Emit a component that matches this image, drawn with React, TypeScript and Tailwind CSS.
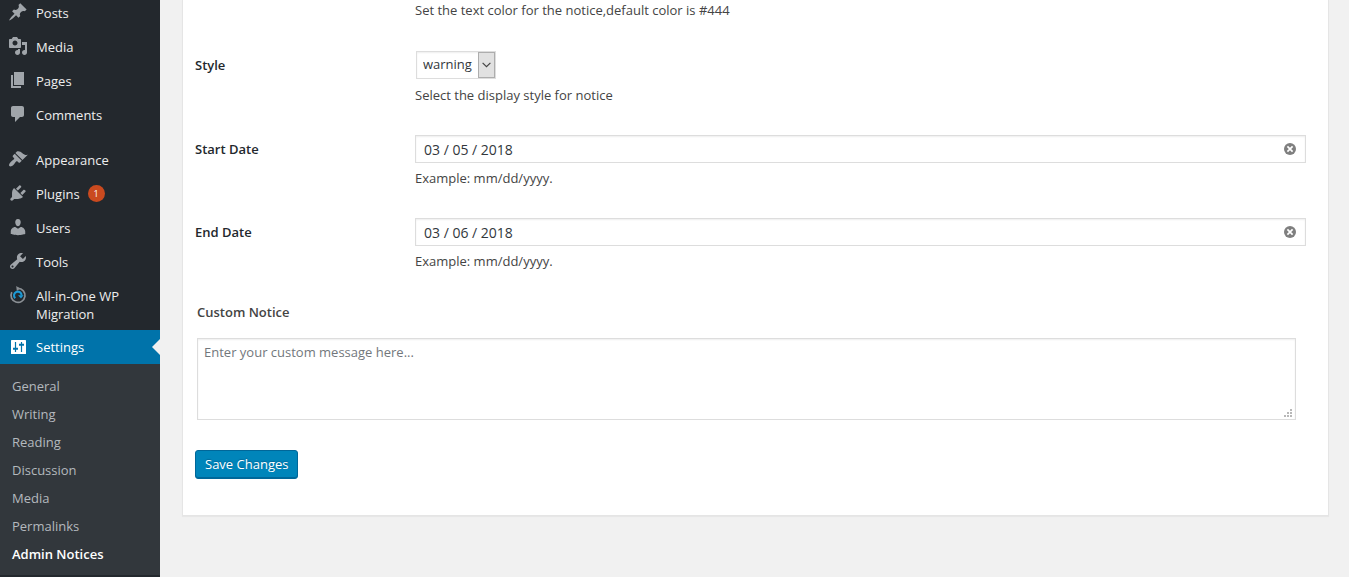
import type { ReactNode } from "react";
import { useState } from "react";

type MenuItem = { label: string; path?: string; badge?: number };

const primaryItems: MenuItem[] = [
  {
    label: "Posts",
    path: "M10.44 3.02l1.82-1.82 6.36 6.35-1.83 1.82c-1.05-.68-2.48-.57-3.41.36l-.75.75c-.92.93-1.04 2.35-.35 3.41l-1.83 1.82-2.41-2.41-2.8 2.79c-.42.42-3.38 2.71-3.8 2.29s1.86-3.39 2.28-3.81l2.79-2.79L4.1 9.36l1.83-1.82c1.05.69 2.48.57 3.4-.36l.75-.75c.93-.92 1.05-2.35.36-3.41z",
  },
  {
    label: "Media",
    path: "M13 11V4c0-.55-.45-1-1-1h-1.67L9 1H5L3.67 3H2c-.55 0-1 .45-1 1v7c0 .55.45 1 1 1h10c.55 0 1-.45 1-1zM7 4.5c1.38 0 2.5 1.12 2.5 2.5S8.38 9.5 7 9.5 4.5 8.38 4.5 7 5.62 4.5 7 4.5zM14 6h5v10.5c0 1.38-1.12 2.5-2.5 2.5S14 17.88 14 16.5s1.12-2.5 2.5-2.5c.17 0 .34.02.5.05V9h-3V6zm-4 8.05V13h2v3.5c0 1.38-1.12 2.5-2.5 2.5S7 17.88 7 16.5 8.12 14 9.5 14c.17 0 .34.02.5.05z",
  },
  { label: "Pages", path: "M6 15V2h10v13H6zm-1 1h8v2H3V5h2v11z" },
  {
    label: "Comments",
    path: "M5 2h9c1.1 0 2 .9 2 2v7c0 1.1-.9 2-2 2h-2l-5 5v-5H5c-1.1 0-2-.9-2-2V4c0-1.1.9-2 2-2z",
  },
];

const secondaryItems: MenuItem[] = [
  {
    label: "Appearance",
    path: "M14.48 11.06L7.41 3.99l1.5-1.5c.5-.56 2.3-.47 3.51.32 1.21.8 1.43 1.28 2.91 2.1 1.18.64 2.45 1.26 4.45.85zm-.71.71L6.7 4.7 4.93 6.47c-.39.39-.39 1.02 0 1.41l1.06 1.06c.39.39.39 1.03 0 1.42-.6.6-1.43 1.11-2.21 1.69-.35.26-.7.53-1.01.84C1.43 14.23.4 16.08 1.4 17.07c.99 1 2.84-.03 4.18-1.36.31-.31.58-.66.85-1.02.57-.78 1.08-1.61 1.69-2.21.39-.39 1.02-.39 1.41 0l1.06 1.06c.39.39 1.02.39 1.41 0z",
  },
  {
    label: "Plugins",
    badge: 1,
    path: "M13.11 4.36L9.87 7.6 8 5.73l3.24-3.24c.35-.34 1.05-.2 1.56.32.52.51.66 1.21.31 1.55zm-8 1.77l.91-1.12 9.01 9.01-1.19.84c-.71.71-2.63 1.16-3.82 1.16H6.14L4.9 17.26c-.59.59-1.54.59-2.12 0-.59-.58-.59-1.53 0-2.12l1.24-1.24v-3.88c0-1.13.4-3.19 1.09-3.89zm7.26 3.97l3.24-3.24c.34-.35 1.04-.21 1.55.31.52.51.66 1.21.31 1.55l-3.24 3.25z",
  },
  {
    label: "Users",
    path: "M10 9.25c-2.27 0-2.73-3.44-2.73-3.44C7 4.02 7.82 2 9.97 2c2.16 0 2.98 2.02 2.71 3.81 0 0-.41 3.44-2.68 3.44zm0 2.57L12.72 10c2.39 0 4.52 2.33 4.52 4.53v2.49s-3.65 1.13-7.24 1.13c-3.65 0-7.24-1.13-7.24-1.13v-2.49c0-2.25 1.94-4.48 4.47-4.48z",
  },
  {
    label: "Tools",
    path: "M16.68 9.77c-1.34 1.34-3.3 1.67-4.95.99l-5.41 6.52c-.99.99-2.59.99-3.58 0s-.99-2.59 0-3.57l6.52-5.42c-.68-1.65-.35-3.61.99-4.95 1.28-1.28 3.12-1.62 4.72-1.06l-2.89 2.89 2.82 2.82 2.86-2.87c.53 1.58.18 3.39-1.08 4.65zM3.81 16.21c.4.39 1.04.39 1.43 0 .4-.4.4-1.04 0-1.43-.39-.4-1.03-.4-1.43 0-.39.39-.39 1.03 0 1.43z",
  },
  { label: "All-in-One WP Migration" },
];

const submenu = ["General", "Writing", "Reading", "Discussion", "Media", "Permalinks", "Admin Notices"];

function MigrationIcon() {
  return (
    <svg viewBox="0 0 20 20" className="size-5 shrink-0" fill="none" aria-hidden="true">
      <path d="M10 3.4A7 7 0 1 1 3.8 7.2" stroke="#8a8f94" strokeWidth="1.7" />
      <path d="M8.2 1L12.2 3.4L8.8 6z" fill="#8a8f94" />
      <path d="M7.2 13.2A3.8 3.8 0 1 1 13.6 10.4" stroke="#1c9ad6" strokeWidth="2.1" />
      <path d="M10 10.2H15.6L13 13.6z" fill="#1c9ad6" />
    </svg>
  );
}

function SettingsIcon() {
  return (
    <svg viewBox="0 0 20 20" className="size-5 -my-px shrink-0" aria-hidden="true">
      <rect x="3" y="3" width="15" height="14" rx="0.6" fill="#fff" />
      <path d="M7.5 5v10M13.5 5v10" stroke="#0073aa" strokeWidth="1.2" />
      <path d="M5 11.7h5M11 7.7h5" stroke="#0073aa" strokeWidth="2" />
    </svg>
  );
}

function MenuLink({ item }: { item: MenuItem }) {
  return (
    <li>
      <a href="#" className="flex gap-2 py-2 pl-2 pr-4 text-[13px] leading-[18px] text-[#eee]">
        <span className="-mt-0.5 h-5 w-5 shrink-0">
          {item.path ? (
            <svg viewBox="0 0 20 20" className="size-5" fill="#a0a5aa" aria-hidden="true">
              <path d={item.path} />
            </svg>
          ) : (
            <MigrationIcon />
          )}
        </span>
        <span>{item.label}</span>
        {item.badge ? (
          <span className="flex size-[17px] items-center justify-center rounded-full bg-[#ca4a1f] text-[9px] leading-[17px] text-white">
            {item.badge}
          </span>
        ) : null}
      </a>
    </li>
  );
}

function Sidebar() {
  return (
    <nav className="w-40 shrink-0 overflow-hidden bg-[#23282d]">
      <ul className="-mt-1">
        {primaryItems.map((item) => (
          <MenuLink key={item.label} item={item} />
        ))}
        <li className="h-[11px]" role="separator" />
        {secondaryItems.map((item) => (
          <MenuLink key={item.label} item={item} />
        ))}
        <li className="-mt-px">
          <a
            href="#"
            className="relative flex gap-2 bg-[#0073aa] py-2 pl-2 text-[13px] leading-[18px] text-white"
          >
            <SettingsIcon />
            Settings
            <span className="absolute right-0 top-[9px] border-y-8 border-r-8 border-y-transparent border-r-[#f1f1f1]" />
          </a>
          <ul className="bg-[#32373c] pb-[7px] pt-2">
            {submenu.map((name) => (
              <li key={name}>
                <a
                  href="#"
                  className={
                    name === "Admin Notices"
                      ? "block px-3 py-[5px] text-[13px] font-semibold leading-[18px] text-white"
                      : "block px-3 py-[5px] text-[13px] leading-[18px] text-[#b4b9be]"
                  }
                >
                  {name}
                </a>
              </li>
            ))}
          </ul>
        </li>
      </ul>
    </nav>
  );
}

function Row({ id, label, hint, children }: { id: string; label: string; hint: string; children: ReactNode }) {
  return (
    <div className="flex">
      <label htmlFor={id} className="w-[220px] shrink-0 py-1 text-[13px] font-semibold leading-[21px] text-[#23282d]">
        {label}
      </label>
      <div className="min-w-0 flex-1">
        {children}
        <p className="mt-[5px] text-[13px] leading-5 text-[#444]">{hint}</p>
      </div>
    </div>
  );
}

function DateField({ id, initial }: { id: string; initial: string }) {
  const [value, setValue] = useState(initial);
  return (
    <div className="relative">
      <input
        id={id}
        type="text"
        value={value}
        onChange={(e) => setValue(e.target.value)}
        className="block h-7 w-full border border-[#ddd] bg-white px-2 text-[14px] text-[#32373c] shadow-[inset_0_1px_2px_rgba(0,0,0,0.07)] outline-none"
      />
      <button type="button" aria-label="Clear date" onClick={() => setValue("")} className="absolute right-[10px] top-2">
        <svg viewBox="0 0 12 12" className="size-3" aria-hidden="true">
          <circle cx="6" cy="6" r="6" fill="#7f7f7f" />
          <path d="M3.4 3.4l5.2 5.2M8.6 3.4L3.4 8.6" stroke="#fff" strokeWidth="1.7" />
        </svg>
      </button>
    </div>
  );
}

export default function App() {
  return (
    <div className="flex min-h-screen bg-[#f1f1f1] font-['Open_Sans','Noto_Sans',sans-serif]">
      <Sidebar />
      <main className="min-w-0 flex-1 pl-[22px] pr-5">
        <form
          onSubmit={(e) => e.preventDefault()}
          className="border-x border-b border-[#e5e5e5] bg-white pb-9 pl-3 pr-[22px] shadow-[0_1px_1px_rgba(0,0,0,0.04)]"
        >
          <div className="flex flex-col gap-[30px]">
            <p className="pb-px pl-[220px] text-[13px] leading-5 text-[#444]">
              Set the text color for the notice,default color is #444
            </p>
            <Row id="style" label="Style" hint="Select the display style for notice">
              <div className="relative ml-px h-[29px] w-20">
                <select
                  id="style"
                  className="block h-7 w-full appearance-none border border-[#ddd] bg-white pl-1.5 text-[13px] text-[#32373c] shadow-[inset_0_1px_2px_rgba(0,0,0,0.07)] outline-none"
                >
                  <option>warning</option>
                  <option>error</option>
                  <option>success</option>
                  <option>info</option>
                </select>
                <span className="pointer-events-none absolute right-px top-px flex h-[26px] w-[17px] items-center justify-center border border-[#adadad] bg-[#e1e1e1]">
                  <svg viewBox="0 0 9 6" className="h-1.5 w-[9px]" fill="none" stroke="#444" strokeWidth="1.2" aria-hidden="true">
                    <path d="M.6 .8L4.5 4.7L8.4 .8" />
                  </svg>
                </span>
              </div>
            </Row>
            <Row id="start" label="Start Date" hint="Example: mm/dd/yyyy.">
              <DateField id="start" initial="03 / 05 / 2018" />
            </Row>
            <Row id="end" label="End Date" hint="Example: mm/dd/yyyy.">
              <DateField id="end" initial="03 / 06 / 2018" />
            </Row>
          </div>
          <div className="ml-0.5 mr-[10px] mt-[31px]">
            <label htmlFor="notice" className="block text-[13px] font-semibold leading-5 text-[#444]">
              Custom Notice
            </label>
            <div className="relative mt-4">
              <textarea
                id="notice"
                placeholder="Enter your custom message here..."
                className="block h-[82px] w-full resize-none border border-[#ddd] bg-white px-1.5 py-1 text-[13px] leading-[18px] text-[#32373c] shadow-[inset_0_1px_2px_rgba(0,0,0,0.07)] outline-none placeholder:text-[#72777c]"
              />
              <svg viewBox="0 0 8 8" className="pointer-events-none absolute bottom-[3px] right-1 size-2" fill="#b8b8b8" aria-hidden="true">
                <path d="M6 0h2v2H6zM3 3h2v2H3zM6 3h2v2H6zM0 6h2v2H0zM3 6h2v2H3zM6 6h2v2H6z" />
              </svg>
            </div>
          </div>
          <button
            type="submit"
            className="mt-[30px] block h-[29px] rounded-[3px] border border-[#006799] bg-[#0085ba] px-[9px] text-[13px] text-white shadow-[inset_0_-1px_0_#006799] [text-shadow:0_-1px_1px_#006799]"
          >
            Save Changes
          </button>
        </form>
      </main>
    </div>
  );
}
